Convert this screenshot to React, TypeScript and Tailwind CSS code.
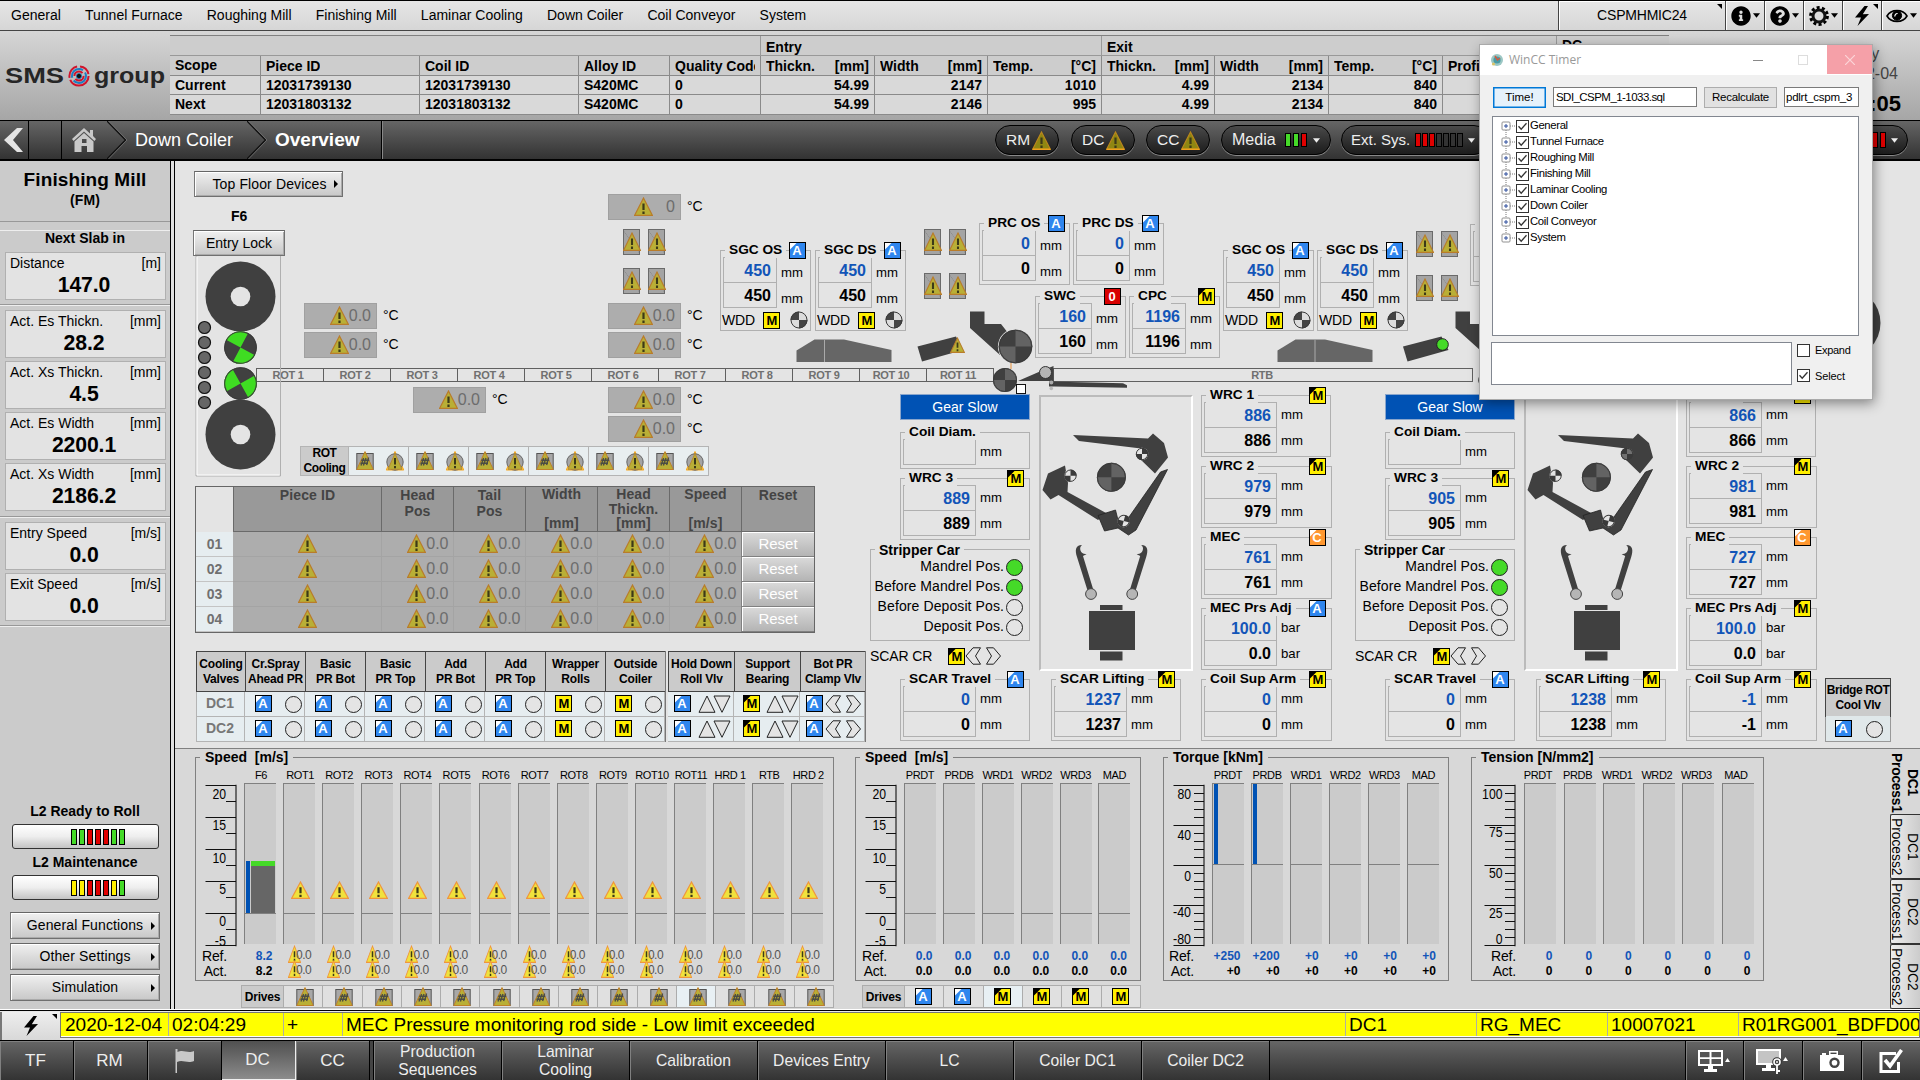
import React from "react";
import { FaInfoCircle, FaQuestionCircle } from "react-icons/fa";

/* ---------- small symbols ---------- */

function Warn({ className = "", bright = false, dim = false }: { className?: string; bright?: boolean; dim?: boolean }) {
  return (
    <svg viewBox="0 0 19 18" className={"shrink-0 " + className} preserveAspectRatio="none">
      <polygon points="9.5,1 18.3,17.3 0.7,17.3" fill={bright ? "#f0e23c" : dim ? "#8f8712" : "#b9af36"} stroke={bright ? "#f0963c" : dim ? "#b9861c" : "#b97c2a"} strokeWidth="1.2" />
      {dim && <path d="M0.7 17.3H18.3" stroke="#f0a01e" strokeWidth="1.4" />}
      <path d="M9.5 6.2v6M9.5 13.8v2.2" stroke="#3c3a18" strokeWidth="2.2" />
    </svg>
  );
}

type Mode = "A" | "A0" | "M" | "M0" | "C" | "0";
const modeFill: Record<Mode, string> = { A: "#2f86ee", A0: "#2f86ee", M: "#ffee00", M0: "#ffee00", C: "#ff9730", "0": "#d80000" };

function Badge({ mode, className = "" }: { mode: Mode; className?: string }) {
  const isM = mode[0] === "M";
  const corner = mode === "A" || mode === "C" ? "#ffffff" : mode === "M" ? "#000000" : null;
  return (
    <svg viewBox="0 0 17 17" className={"h-[17px] w-[17px] shrink-0 " + className}>
      <rect x="0.5" y="0.5" width="16" height="16" fill={modeFill[mode]} stroke="#000" />
      {corner && <polygon points="1,1 7.5,1 1,7.5" fill={corner} />}
      <text x={isM ? 8.8 : 8} y="13.4" textAnchor="middle" fontSize="13" fontWeight="bold" fontFamily="Liberation Sans, sans-serif" fill={isM ? "#000" : "#fff"}>
        {mode[0]}
      </text>
    </svg>
  );
}

function Lamp({ on = false, className = "" }: { on?: boolean; className?: string }) {
  return <span className={"block h-[17px] w-[17px] shrink-0 rounded-full border border-[#222] " + (on ? "bg-[#45da28] " : "bg-[#e4e4e4] ") + className} />;
}

function Quad({ cx, cy, r, a = "#3f3f3f", b = "#666", turn = 0 }: { cx: number; cy: number; r: number; a?: string; b?: string; turn?: number }) {
  return (
    <g transform={`translate(${cx} ${cy}) rotate(${turn})`}>
      <circle r={r} fill={a} />
      <path d={`M0 0V${-r}A${r} ${r} 0 0 1 ${r} 0ZM0 0V${r}A${r} ${r} 0 0 1 ${-r} 0Z`} fill={b} />
      <circle r={r - 0.5} fill="none" stroke="#3a3a3a" />
    </g>
  );
}

function HashWarn({ round = false }: { round?: boolean }) {
  return (
    <svg viewBox="0 0 18 20" className="h-[20px] w-[18px] shrink-0">
      {round ? (
        <>
          <polygon points="9,0.5 17.8,19 0.2,19" fill="#ffd84a" stroke="#f5a623" />
          <circle cx="9" cy="11" r="8.2" fill="#a5a5a5" stroke="#666" />
          <polygon points="9,2.5 16,18.3 2,18.3" fill="#b9af36" stroke="#b98a30" />
          <path d="M9 7v6.5M9 15v2.2" stroke="#3c3a18" strokeWidth="2" />
        </>
      ) : (
        <>
          <rect x="0.8" y="2.5" width="16.4" height="16" fill="#a8a8a8" stroke="#555" />
          <polygon points="9,0.6 17.2,18.5 0.8,18.5" fill="#b9af36" stroke="#c0802a" strokeWidth="1" />
          <path d="M7.6 7l-2.6 7.5M10 7L7.4 14.5M12.6 6.5l-2 7.5M5.2 9.2h8M4.4 12.2h7.6" stroke="#4c4c44" strokeWidth="1.4" fill="none" />
        </>
      )}
    </svg>
  );
}

function Bars({ colors }: { colors: string[] }) {
  return (
    <span className="flex gap-[2px]">
      {colors.map((c, i) => (
        <span key={i} className={"h-4 w-1.5 border border-black " + c} />
      ))}
    </span>
  );
}
const G = "bg-[#45da28]";
const R = "bg-[#e00000]";
const Y = "bg-[#ffee00]";
const D = "bg-[#333]";

function Bolt({ className = "" }: { className?: string }) {
  return (
    <svg viewBox="0 0 16 20" className={"h-5 w-4 " + className}>
      <polygon points="10.5,0 1,11.5 7,11.5 3.5,20 15,8 8.8,8.2 14,0" />
    </svg>
  );
}

function Caret({ className = "" }: { className?: string }) {
  return (
    <svg viewBox="0 0 8 5" className={"h-[5px] w-[7px] shrink-0 " + className}>
      <polygon points="0,0 8,0 4,5" fill="currentColor" />
    </svg>
  );
}

/* ---------- top area ---------- */

function MenuBar() {
  const tool = "flex h-full w-[39px] items-center justify-center border-l border-[#444] shadow-[inset_1px_1px_0_#fff] relative";
  return (
    <div className="flex h-[31px] items-center border-b border-t border-b-[#444] border-t-black bg-gradient-to-b from-[#e6e6e6] to-[#d6d6d6] text-[14px]">
      <div className="flex grow gap-[24.2px] pl-[11px]">
        {["General", "Tunnel Furnace", "Roughing Mill", "Finishing Mill", "Laminar Cooling", "Down Coiler", "Coil Conveyor", "System"].map((t) => (
          <span key={t}>{t}</span>
        ))}
      </div>
      <div className="relative flex h-full w-[167px] items-center justify-center border-l border-[#444] shadow-[inset_1px_1px_0_#fff]">
        <span className="tracking-[-0.2px]">CSPMHMIC24</span>
        <svg viewBox="0 0 5 5" className="absolute right-[3px] top-[3px] h-[5px] w-[5px]"><polygon points="0,0 5,0 5,5" /></svg>
      </div>
      <div className={tool}><FaInfoCircle className="h-5 w-5" /><Caret className="ml-0.5" /></div>
      <div className={tool}><FaQuestionCircle className="h-5 w-5" /><Caret className="ml-0.5" /></div>
      <div className={tool}>
        <svg viewBox="0 0 20 20" className="h-5 w-5">
          <circle cx="10" cy="10" r="8.4" fill="none" stroke="#000" strokeWidth="3" strokeDasharray="3 2.28" />
          <circle cx="10" cy="10" r="6" fill="#ddd" stroke="#111" strokeWidth="3" />
        </svg>
        <Caret className="ml-0.5" />
      </div>
      <div className={tool}>
        <Bolt />
        <svg viewBox="0 0 5 5" className="absolute right-[3px] top-[3px] h-[5px] w-[5px]"><polygon points="0,0 5,0 5,5" /></svg>
      </div>
      <div className={tool}>
        <svg viewBox="0 0 22 16" className="h-4 w-[22px]" fill="none" stroke="#000">
          <path d="M1 8C5 0.8 17 0.8 21 8C17 15.2 5 15.2 1 8Z" strokeWidth="1.6" />
          <circle cx="11" cy="7.6" r="4.6" fill="#000" />
          <path d="M9 8.5a2.4 2.4 0 0 1 2.6-3" stroke="#fff" strokeWidth="1.2" />
        </svg>
        <Caret className="ml-0.5" />
      </div>
    </div>
  );
}

function Logo() {
  return (
    <svg viewBox="0 0 170 89" className="h-[89px] w-[170px] shrink-0" fontFamily="Liberation Sans, sans-serif" fontWeight="bold" fontSize="21.5" fill="#262626">
      <text x="5" y="51.5" textLength="59" lengthAdjust="spacingAndGlyphs">SMS</text>
      <text x="94" y="51.5" textLength="71" lengthAdjust="spacingAndGlyphs">group</text>
      <g fill="none" strokeWidth="2">
        <circle cx="79" cy="45" r="9.6" stroke="#d0142c" strokeDasharray="26 2 15 3 12 2" />
        <circle cx="79" cy="45" r="7" stroke="#1d7ec2" strokeDasharray="17 3" />
        <circle cx="79" cy="45" r="4.6" stroke="#d0142c" strokeDasharray="11 3" />
        <circle cx="79" cy="45" r="2.6" fill="#111" stroke="#1d7ec2" strokeWidth="0.8" />
      </g>
    </svg>
  );
}

const headCols: [string, string][] = [
  ["Scope", ""], ["Piece ID", ""], ["Coil ID", ""], ["Alloy ID", ""], ["Quality Code", ""],
  ["Thickn.", "[mm]"], ["Width", "[mm]"], ["Temp.", "[°C]"], ["Thickn.", "[mm]"], ["Width", "[mm]"], ["Temp.", "[°C]"], ["Profile", ""], ["", ""],
];
const headRows = [
  ["Current", "12031739130", "12031739130", "S420MC", "0", "54.99", "2147", "1010", "4.99", "2134", "840", "", ""],
  ["Next", "12031803132", "12031803132", "S420MC", "0", "54.99", "2146", "995", "4.99", "2134", "840", "", ""],
];

function Header() {
  return (
    <div className="flex h-[89px] bg-gradient-to-b from-[#d6d6d6] to-[#a6a6a6]">
      <Logo />
      <div className="mt-1 grid h-[80px] w-[1499px] shrink-0 grid-cols-[90px_159px_159px_91px_91px_114px_113px_114px_113px_114px_114px_114px_113px] grid-rows-4 border-t border-[#808080] text-[14px] font-bold leading-[19px]">
        <div className="col-span-5 border-b border-[#999] bg-[#cdcdcd]" />
        <div className="col-span-3 overflow-hidden border-b border-l border-[#999] bg-[#cdcdcd] pl-[5px] pt-[2px]">Entry</div>
        <div className="col-span-4 overflow-hidden border-b border-l border-[#999] bg-[#cdcdcd] pl-[5px] pt-[2px]">Exit</div>
        <div className="overflow-hidden border-b border-l border-[#999] bg-[#cdcdcd] pl-[5px]">DC</div>
        {headCols.map(([a, b], i) => (
          <div key={i} className={"flex justify-between overflow-hidden whitespace-nowrap border-b border-[#8a8a8a] bg-[#cdcdcd] px-[5px] " + (i === 0 ? "" : "border-l pt-[1.5px]")}>
            <span className="overflow-hidden">{a}</span>
            <span>{b}</span>
          </div>
        ))}
        {headRows.map((r, k) =>
          r.map((c, i) => (
            <div key={k + "-" + i} className={"border-b border-[#8a8a8a] bg-[#d9d9d9] px-[5px] " + (i === 0 ? "" : "border-l ") + (i > 4 ? "text-right" : "")}>{c}</div>
          )),
        )}
      </div>
      <div className="ml-[141px] flex w-[94px] flex-col items-center pt-[13px] text-[16px] leading-[20px] text-[#444]">
        <span>Friday</span>
        <span>2020-12-04</span>
        <span className="mt-2 text-[22px] font-bold leading-[24px] text-black">02:04:05</span>
      </div>
    </div>
  );
}

function Pill({ children, className = "" }: { children: React.ReactNode; className?: string }) {
  return (
    <div className={"flex h-[30px] items-center rounded-full border-[1.5px] border-black bg-gradient-to-b from-[#4a4a4a] to-[#1c1c1c] text-[15.5px] text-[#eee] shadow-[0_1px_0_#888] " + className}>{children}</div>
  );
}

function Crumb({ className = "" }: { className?: string }) {
  return (
    <svg viewBox="0 0 20 38" className={"h-[38px] w-5 shrink-0 " + className} fill="none">
      <path d="M0 0L18.5 19L0 38" stroke="#111" strokeWidth="1.4" />
      <path d="M1.5 0L20 19L1.5 38" stroke="#777" strokeWidth="0.8" />
    </svg>
  );
}

function NavBar() {
  const unit = "w-[64px] gap-[2px] pl-[10px]";
  return (
    <div className="flex h-[41px] items-center border-b-2 border-t border-black bg-gradient-to-b from-[#666] to-[#333] text-[18px] text-white">
      <div className="flex h-full w-[29px] items-center border-r border-black pl-1">
        <svg viewBox="0 0 19 24" className="h-6 w-[19px]"><polygon points="13,0 19,0 9,12 19,24 13,24 0,12" fill="#e4e4e4" /></svg>
      </div>
      <div className="h-full w-[33px] border-r border-black" />
      <svg viewBox="0 0 24 24" className="ml-[10px] h-6 w-6" fill="#c9c9c9">
        <polygon points="12,0 0,11 1.6,13 12,3.4 22.4,13 24,11 21,8 21,2 18,2 18,5.4" />
        <path d="M2.5 13.5L12 5L21.5 13.5V24H15V18H9.5V24H2.5ZM10 11V15H14.5V11Z" fillRule="evenodd" />
      </svg>
      <Crumb className="ml-[11px]" />
      <span className="ml-[8px] w-[112px]">Down Coiler</span>
      <Crumb />
      <span className="ml-[8px] w-[85px] text-[19px] font-bold">Overview</span>
      <div className="ml-[21px] h-full border-l border-black shadow-[1px_0_0_#888]" />
      <div className="flex grow items-center pl-[613px]">
        <Pill className={unit}>RM<Warn dim className="h-[19px] w-[19px]" /></Pill>
        <Pill className={"ml-3 " + unit}>DC<Warn dim className="h-[19px] w-[19px]" /></Pill>
        <Pill className={"ml-[11px] " + unit}>CC<Warn dim className="h-[19px] w-[19px]" /></Pill>
        <Pill className="ml-[11px] w-[110px] gap-[8px] pl-[10px]">
          <span className="w-[45px] text-[16px]">Media</span>
          <span className="flex gap-[2px]">
            {[G, G, R].map((c, i) => <span key={i} className={"h-[14px] w-1.5 border border-black " + c} />)}
          </span>
          <Caret className="-ml-0.5" />
        </Pill>
        <Pill className="ml-[10px] w-[148px] gap-[5px] pl-[9px]">
          <span className="text-[15px]">Ext. Sys.</span>
          <span className="flex gap-px">
            {[R, R, R, D, D, D, D].map((c, i) => <span key={i} className={"h-[14px] w-1.5 border border-black " + c} />)}
          </span>
          <Caret />
        </Pill>
        <Pill className="ml-auto mr-[12px] w-[148px] justify-end gap-[5px] pr-[9px]">
          <Bars colors={[R, R, R]} />
          <Caret />
        </Pill>
      </div>
    </div>
  );
}

/* ---------- left column ---------- */

function Readout({ label, unit, value }: { label: string; unit: string; value: string }) {
  return (
    <div className="ml-[5px] h-[48px] w-[161px] border border-[#b0b0b0] bg-[#e3e3e3]">
      <div className="flex justify-between pl-[4px] pr-[4px] text-[14px] leading-[20px]"><span>{label}</span><span>{unit}</span></div>
      <div className="pr-[3px] text-center text-[21.2px] font-bold leading-[23px] tracking-[-0.1px] text-black">{value}</div>
    </div>
  );
}

function Button({ label, className = "", arrow = false }: { label: string; className?: string; arrow?: boolean }) {
  return (
    <div className={"flex items-center justify-center border border-b-[#707070] border-l-[#777] border-r-[#707070] border-t-[#666] bg-gradient-to-b from-[#f0f0f0] to-[#c8c8c8] text-[14px] shadow-[inset_1px_1px_0_#fff,inset_-1px_-1px_0_#aaa] " + className}>
      <span className={"grow text-center " + (arrow ? "pl-[8px] tracking-[0.12px]" : "")}>{label}</span>
      {arrow && (
        <svg viewBox="0 0 4 8" className="mr-[4px] h-2 w-1"><polygon points="0,0 4,4 0,8" /></svg>
      )}
    </div>
  );
}

function Side() {
  const line = "border-t border-[#989898] shadow-[0_1px_0_#eee]";
  const status = "flex h-[25px] w-[147px] items-center justify-center rounded-[3px] border border-[#333] bg-gradient-to-b from-white via-[#eee] to-[#c4c4c4] pl-6";
  return (
    <div className="flex h-[848px] w-[175px] shrink-0 border-r border-black bg-[#e0e0e0]">
      <div className="flex w-[171px] flex-col border-r border-black bg-[#cbcbcb]">
        <div className="h-[60px] pt-[8px] text-center text-[19px] font-bold leading-[22px] tracking-[0.1px]">
          Finishing Mill
          <div className="text-[14px] leading-[18px]">(FM)</div>
        </div>
        <div className={"pt-[8px] " + line} />
        <div className="h-[22px] text-center text-[14px] font-bold leading-[16px]">Next Slab in</div>
        <Readout label="Distance" unit="[m]" value="147.0" />
        <div className={"mb-[4px] mt-[4px] " + line} />
        <div className="mt-px flex flex-col gap-[3px]">
          <Readout label="Act. Es Thickn." unit="[mm]" value="28.2" />
          <Readout label="Act. Xs Thickn." unit="[mm]" value="4.5" />
          <Readout label="Act. Es Width" unit="[mm]" value="2200.1" />
          <Readout label="Act. Xs Width" unit="[mm]" value="2186.2" />
        </div>
        <div className={"mb-[5px] mt-[5px] " + line} />
        <div className="flex flex-col gap-[3px]">
          <Readout label="Entry Speed" unit="[m/s]" value="0.0" />
          <Readout label="Exit Speed" unit="[m/s]" value="0.0" />
        </div>
        <div className={"mt-[4px] " + line} />
        <div className="mt-auto flex flex-col items-center pb-[8px] text-[14px] font-bold">
          <span className="mb-[5px] leading-4">L2 Ready to Roll</span>
          <div className={status + " relative left-[0.5px]"}><Bars colors={[G, G, R, R, R, G, G]} /></div>
          <span className="mb-[5px] mt-[5px] leading-4">L2 Maintenance</span>
          <div className={status + " relative left-[0.5px]"}><Bars colors={[Y, Y, R, R, R, Y, G]} /></div>
          <div className="mt-[12px] flex flex-col gap-[4px] font-normal">
            <Button label="General Functions" arrow className="h-[27px] w-[150px]" />
            <Button label="Other Settings" arrow className="h-[27px] w-[150px]" />
            <Button label="Simulation" arrow className="h-[27px] w-[150px]" />
          </div>
        </div>
      </div>
    </div>
  );
}

/* ---------- process mimic ---------- */

type BoxProps = { title: string; className: string; mode?: Mode; set?: string; act?: string; unit?: string; field?: string; badge?: string; unitPad?: string; titleTop?: string; foot?: boolean };

function Box({ title, className, mode, set, act, unit = "mm", field = "w-[73px]", badge = "right-[5px]", unitPad = "pt-0", titleTop = "-top-[9px]", foot }: BoxProps) {
  const single = act === undefined;
  return (
    <div className={"absolute border border-[#b0b0b0] " + className}>
      <span className={"absolute left-[4px] whitespace-nowrap bg-[#e4e4e4] px-1 text-[13.7px] font-bold leading-4 " + titleTop}>{title}</span>
      {mode && <span className={"absolute -top-[9px] " + badge}><Badge mode={mode} /></span>}
      <div className={"ml-[2px] mt-[6px] flex " + (single ? "h-[26px]" : "h-[51px]")}>
        <div className={"border border-[#b0b0b0] text-right font-bold " + field}>
          <div className={"h-[25px] pr-[5px] text-[16px] leading-[26px] text-[#1255b8] " + (single ? "" : "border-b border-[#b0b0b0]")}>{set}</div>
          {!single && <div className="h-[24px] pr-[5px] text-[16px] leading-[26px]">{act}</div>}
        </div>
        <div className={"pl-[4px] text-[13.2px] leading-[25px] " + unitPad}>
          <div>{unit}</div>
          {!single && <div className="relative top-px">{unit}</div>}
        </div>
      </div>
      {foot && (
        <div className="mt-[3px] flex h-[18px] items-center pl-px text-[14px] leading-[17px]">
          <span className="w-[41px] tracking-[-0.2px]">WDD</span>
          <Badge mode="M0" />
          <svg viewBox="-9 -9 18 18" className="ml-[10px] h-[18px] w-[18px]"><Quad cx={0} cy={0} r={8.5} a="#dcdcdc" b="#444" turn={90} /></svg>
        </div>
      )}
    </div>
  );
}

function Temp({ className, value = "0.0" }: { className: string; value?: string }) {
  return (
    <div className={"absolute flex items-center " + className}>
      <div className="flex h-[26px] w-[73px] items-center justify-end border border-[#a0a0a0] bg-[#adadad] pr-[5px] text-[16px] text-[#6c6c6c]">
        <Warn className={"mb-px h-[19px] w-[19px] " + (value === "0" ? "mr-[13px]" : "")} />
        {value}
      </div>
      <span className="relative -top-px ml-[6px] text-[14px] leading-none">°C</span>
    </div>
  );
}

function ValvePair({ className }: { className: string }) {
  const v = (
    <span className="flex h-[26px] w-[17px] items-end justify-center border border-[#6a6a6a] bg-[#a4a4a4] bg-[linear-gradient(55deg,transparent_48%,#8c8c8c_50%,transparent_52%)] pb-[3px]">
      <Warn className="h-[19px] w-[18px]" />
    </span>
  );
  return <div className={"absolute flex gap-[8px] " + className}>{v}{v}</div>;
}

const K = "#404040";

function CoilerDrawing({ darkHub = false }: { darkHub?: boolean }) {
  return (
    <svg viewBox="1040 396 152 274" className="h-[274px] w-[152px]">
      <polygon points="1073,435 1148,438.5 1153,433.5 1164,443 1168,457.5 1155,473.5 1140,459 1141,448.5 1079,441" fill={K} />
      <polygon points="1065,465.5 1068,483 1067.5,492 1107,513.5 1098,520 1058.5,495 1050.5,499.5 1042.5,490 1048,473.5" fill={K} />
      <polygon points="1098,515.5 1115.5,510 1118,520 1129,517 1160.5,472 1167.5,469.5 1136,530 1128.5,535 1118,528 1104.5,531" fill={K} stroke="#222" strokeWidth="0.8" />
      {darkHub ? <Quad cx={1142} cy={454} r={6.2} a="#3a3a3a" b="#707070" /> : <Quad cx={1142} cy={454} r={6.2} a="#e4e4e4" b="#3a3a3a" />}
      <Quad cx={1070.5} cy={475.7} r={6.2} a="#e4e4e4" b="#3a3a3a" />
      <Quad cx={1123.7} cy={521} r={6.2} a="#e4e4e4" b="#3a3a3a" turn={15} />
      <Quad cx={1111.4} cy={477.3} r={14.5} b="#636363" />
      {[0, 1].map((i) => (
        <g key={i} transform={i ? "translate(2223.2 0) scale(-1 1)" : undefined}>
          <path d="M1082 545C1075 545 1075 551 1077 557L1088 592H1094L1083 556C1084 555 1086 555 1086.5 554C1081 555 1078 548 1082 545Z" fill={K} />
          <circle cx="1091" cy="594" r="5.4" fill="#b5b5b5" stroke="#444" />
        </g>
      ))}
      <rect x="1100" y="605" width="22.5" height="5" fill={K} />
      <rect x="1089" y="611" width="46" height="39" fill={K} />
      <rect x="1100" y="651.5" width="22.5" height="9" fill={K} />
    </svg>
  );
}

function Chevrons() {
  return (
    <svg viewBox="0 0 37 18" className="h-[18px] w-[37px] shrink-0" fill="#e4e4e4" stroke="#222">
      <polygon points="8,0.8 15.5,0.8 10.5,9 15.5,17.2 8,17.2 1,9" />
      <polygon points="21.5,0.8 28.5,0.8 35.5,9 28.5,17.2 21.5,17.2 26.5,9" />
    </svg>
  );
}

function UpDown() {
  return (
    <svg viewBox="0 0 33 18" className="h-[18px] w-[33px] shrink-0" fill="#e4e4e4" stroke="#222">
      <polygon points="9,1 17,17.3 1,17.3" />
      <polygon points="16,1 32,1 24,17.3" />
    </svg>
  );
}

type CoilerData = {
  wrc1: string; wrc2: string; wrc3: string; mec: string; travel: string; lift: string; sup: string; adj: Mode; darkHub?: boolean; className: string;
};

function DownCoiler(p: CoilerData) {
  return (
    <div className={"absolute top-[387px] h-[354px] w-[462px] " + p.className}>
      <div className="absolute left-[30px] top-[7px] flex h-[26px] w-[130px] items-center justify-center border border-[#8aa6cc] bg-[#0052b4] text-[14px] text-white">Gear Slow</div>
      <Box title="Coil Diam." className="left-[30px] top-[45px] h-[37px] w-[130px]" set="" />
      <Box title="WRC 3" className="left-[30px] top-[91px] h-[62px] w-[130px]" mode="M" set={p.wrc3} act={p.wrc3} />
      <div className="absolute left-0 top-[162px] h-[92px] w-[160px] border border-[#b0b0b0]">
        <span className="absolute -top-[8px] left-[4px] bg-[#e4e4e4] px-1 text-[14px] font-bold leading-4">Stripper Car</span>
        <div className="mt-[9px] flex flex-col gap-[3px] pr-[6px] text-[14px] leading-[17px]">
          {["Mandrel Pos.", "Before Mandrel Pos.", "Before Deposit Pos.", "Deposit Pos."].map((t, i) => (
            <div key={t} className="flex items-center justify-end gap-[2px] tracking-[0.1px]"><span className="relative -top-px">{t}</span><Lamp on={i < 2} /></div>
          ))}
        </div>
      </div>
      <div className="absolute left-0 top-[260px] flex items-center text-[14px] leading-[17px]">
        <span className="w-[78px] tracking-[-0.1px]">SCAR CR</span><Badge mode="M" /><Chevrons />
      </div>
      <Box title="SCAR Travel" className="left-[30px] top-[292px] h-[62px] w-[130px]" mode="A" set={p.travel} act={p.travel} />
      <div className="absolute left-[169px] top-[8px] border-2 border-[#bbb] border-b-white border-r-white">
        <div className="-m-px"><CoilerDrawing darkHub={p.darkHub} /></div>
      </div>
      <Box title="SCAR Lifting" className="left-[181px] top-[292px] h-[62px] w-[130px]" mode="M" set={p.lift} act={p.lift} />
      <Box title="WRC 1" className="left-[331px] top-[8px] h-[62px] w-[130px]" mode="M" badge="right-[4px]" set={p.wrc1} act={p.wrc1} />
      <Box title="WRC 2" className="left-[331px] top-[79px] h-[62px] w-[131px]" mode="M" set={p.wrc2} act={p.wrc2} />
      <Box title="MEC" className="left-[331px] top-[150px] h-[62px] w-[131px]" mode="C" set={p.mec} act={p.mec} />
      <Box title="MEC Prs Adj" className="left-[331px] top-[221px] h-[62px] w-[131px]" mode={p.adj} set="100.0" act="0.0" unit="bar" />
      <Box title="Coil Sup Arm" className="left-[331px] top-[292px] h-[62px] w-[131px]" mode="M" set={p.sup} act={p.sup} />
    </div>
  );
}

function LineDrawing() {
  return (
    <svg viewBox="175 161 1745 587" className="absolute left-[175px] top-[161px] h-[587px] w-[1745px]">
      <path d="M196 256V476H280.5V256" fill="none" stroke="#b0b0b0" />
      <path d="M197 257V475H279.5" fill="none" stroke="#fff" />
      {[296.5, 434.5].map((y) => (
        <g key={y}>
          <circle cx="240.5" cy={y} r="35" fill={K} />
          <circle cx="240.5" cy={y} r="9.8" fill="#e4e4e4" />
        </g>
      ))}
      <Quad cx={240.5} cy={347.5} r={16.3} a={K} b="#3fdc22" turn={-62} />
      <Quad cx={240.5} cy={383.5} r={16.3} a={K} b="#3fdc22" turn={61} />
      {[327.5, 342.5, 357.5, 372.5, 387.5, 402.5].map((y) => <circle key={y} cx="204.5" cy={y} r="6" fill="#666" stroke="#111" strokeWidth="1.2" />)}
      {[[0, 824.5], [481, 834]].map(([dx, split]) => (
        <g key={dx} transform={`translate(${dx} 0)`}>
          <polygon points="796.5,350.5 814.5,339.5 844,339.5 891.5,350 891.5,362 796.5,362" fill="#666" />
          <path d={`M${split} 339.5V362`} stroke="#aaa" />
        </g>
      ))}
      {[0, 485.5].map((dx) => (
        <g key={dx} transform={`translate(${dx} 0)`}>
          <polygon points="917.5,346.5 956,336.5 963,350 922,361.5" fill={K} />
          <polygon points="970,311.5 984.5,311.5 984.5,324 1001,324 1012,338 1000,355 970,328" fill={K} />
          <circle cx="1015.5" cy="346.5" r="17.6" fill="#e4e4e4" />
          <Quad cx={1015.5} cy={346.5} r={16.8} b="#636363" />
          <path d="M1011 363V369" stroke="#e8923c" />
          <Quad cx={1005} cy={380} r={12} b="#636363" />
          <polygon points="1018,381 1041,371 1053.5,366 1053.5,381" fill={K} />
          <circle cx="1045.5" cy="372.5" r="6" fill="#b5b5b5" stroke="#333" />
          <polygon points="1049,381.5 1123,383.3 1127,385.3 1127,387.7 1054,386.4 1049,386.4" fill={K} />
          <circle cx="1051.3" cy="382.5" r="2" fill="#aaa" />
          <circle cx="1051.3" cy="388.5" r="1.8" fill="#b8b8b8" />
          <rect x="1016.5" y="384.5" width="9" height="9" fill="#fff" stroke="#111" />
        </g>
      ))}
      <circle cx="1442.5" cy="344.5" r="5.8" fill="#45da28" stroke="#222" />
      <circle cx="1845.5" cy="323" r="35" fill={K} />
    </svg>
  );
}

function Strip() {
  return (
    <div className="absolute left-[256px] top-[368px] flex h-[14px] text-[11px] font-bold leading-[12px] tracking-[-0.3px] text-[#707070]">
      {Array.from({ length: 11 }, (_, i) => (
        <div key={i} className="w-[67px] border-y border-l-[1.5px] border-[#606060] pr-1 text-center">ROT {i + 1}</div>
      ))}
      <div className="w-px bg-[#606060]" />
      <div className="ml-[59px] w-[420px] border border-[#606060] pr-[2px] text-center">RTB</div>
    </div>
  );
}

function RotCooling() {
  return (
    <div className="absolute left-[300px] top-[446px] flex h-[30px] border border-[#b4b4b4] bg-[#e8eef0]">
      <div className="flex w-[47px] items-center bg-[#cbcbcb] text-center text-[12px] font-bold leading-[15px] tracking-[-0.4px]"><span className="w-full">ROT<br />Cooling</span></div>
      {[0, 1, 2, 3, 4, 5].map((i) => (
        <div key={i} className="flex w-[60px] items-center justify-center gap-[12px] border-l border-[#b4b4b4] pl-[3px]"><HashWarn /><HashWarn round /></div>
      ))}
    </div>
  );
}

function QueueTable() {
  const head = ["", "Piece ID", "Head\nPos", "Tail\nPos", "Width\n\n[mm]", "Head\nThickn.\n[mm]", "Speed\n\n[m/s]", "Reset"];
  return (
    <div className="absolute left-[195px] top-[486px] grid w-[620px] grid-cols-[37px_148px_72px_72px_72px_72px_72px_73px] grid-rows-[45px_25px_25px_25px_25px] border border-[#666]">
      {head.map((h, i) => (
        <div
          key={i}
          className={
            i === 0
              ? "bg-[#e4e4e4]"
              : "overflow-hidden whitespace-pre border-b border-l border-[#6a6a6a] bg-[#999] text-center text-[14px] font-bold tracking-[0.1px] text-[#444] " +
                (i === 5 ? "leading-[14.6px]" : i === 4 || i === 6 ? "leading-[14.6px]" : "leading-[16px]")
          }
        >
          {h}
        </div>
      ))}
      {["01", "02", "03", "04"].map((n) => (
        <React.Fragment key={n}>
          <div className="border-b border-[#c4c4c4] bg-[#e6edf0] text-center text-[14px] font-bold leading-[24px] text-[#707070]">{n}</div>
          <div className="flex items-center justify-center border-b border-[#a4a4a4] bg-[#adadad] pb-px"><Warn className="h-[19px] w-[19px]" /></div>
          {[0, 1, 2, 3, 4].map((i) => (
            <div key={i} className="flex items-center justify-end border-b border-l border-[#a4a4a4] bg-[#adadad] pb-px pr-[4.5px] text-[16px] text-[#6c6c6c]"><Warn className="h-[19px] w-[19px]" />0.0</div>
          ))}
          <div className="flex items-center justify-center border-b border-l border-[#808080] bg-gradient-to-b from-[#dadada] to-[#b4b4b4] text-[15px] text-white shadow-[inset_1px_1px_0_#fff]">Reset</div>
        </React.Fragment>
      ))}
    </div>
  );
}

function ValveTable() {
  const h = "flex h-[41px] items-center justify-center whitespace-pre border border-r-0 border-[#444] bg-[#cbcbcb] text-center text-[12px] font-bold leading-[15px] tracking-[-0.2px]";
  const cell = "flex items-center border-b border-r border-[#b4b4b4] bg-[#e6edf0]";
  const left: [string, Mode][] = [["Cr.Spray\nAhead PR", "A"], ["Basic\nPR Bot", "A"], ["Basic\nPR Top", "A"], ["Add\nPR Bot", "A"], ["Add\nPR Top", "A"], ["Wrapper\nRolls", "M0"], ["Outside\nCoiler", "M0"]];
  const right: [string, Mode][] = [["Hold Down\nRoll Vlv", "A"], ["Support\nBearing", "M"], ["Bot PR\nClamp Vlv", "A"]];
  return (
    <div className="absolute left-[196px] top-[651px] flex gap-[2px]">
      <div className="grid grid-cols-[49px_60px_60px_60px_60px_60px_60px_60px] grid-rows-[41px_25px_25px] border-r border-[#777]">
        <div className={h}>{"Cooling\nValves"}</div>
        {left.map(([t]) => <div key={t} className={h}>{t}</div>)}
        {["DC1", "DC2"].map((r) => (
          <React.Fragment key={r}>
            <div className={cell + " justify-center border-l pb-px pr-px text-[14px] font-bold text-[#777]"}>{r}</div>
            {left.map(([t, m]) => <div key={t} className={cell + " gap-[13px] pb-px pl-[10px]"}><Badge mode={m} /><Lamp className="relative top-px" /></div>)}
          </React.Fragment>
        ))}
      </div>
      <div className="grid grid-cols-[66px_66px_65px] grid-rows-[41px_25px_25px] border-r border-[#777]">
        {right.map(([t]) => <div key={t} className={h}>{t}</div>)}
        {["DC1", "DC2"].map((r) =>
          right.map(([t, m], i) => <div key={r + t} className={cell + " pb-px " + (i === 0 ? "gap-[7px] pl-[6px]" : i === 1 ? "gap-[6px] pl-[9px]" : "gap-[2px] pl-[6px]")}><Badge mode={m} />{i === 2 ? <Chevrons /> : <UpDown />}</div>),
        )}
      </div>
    </div>
  );
}

function Mimic() {
  const sm = { field: "w-[54px]", badge: "right-[4px]", unitPad: "pt-[3px]", titleTop: "-top-[9.5px]" };
  return (
    <div className="h-[587px] bg-[#e4e4e4]">
      <Strip />
      <LineDrawing />
      <Warn className="absolute left-[950px] top-[337px] h-[16px] w-[15px]" />
      <Button label="Top Floor Devices" arrow className="absolute left-[194px] top-[171px] h-[26px] w-[149px] pl-[2px]" />
      <span className="absolute left-[231px] top-[208px] text-[14px] font-bold leading-4">F6</span>
      <Button label="Entry Lock" className="absolute left-[193px] top-[230px] h-[26px] w-[92px]" />
      <Temp className="left-[304px] top-[303px]" />
      <Temp className="left-[304px] top-[332px]" />
      <Temp className="left-[413px] top-[387px]" />
      <Temp className="left-[608px] top-[194px]" value="0" />
      <Temp className="left-[608px] top-[303px]" />
      <Temp className="left-[608px] top-[332px]" />
      <Temp className="left-[608px] top-[387px]" />
      <Temp className="left-[608px] top-[416px]" />
      <ValvePair className="left-[623px] top-[229px]" />
      <ValvePair className="left-[623px] top-[268px]" />
      <ValvePair className="left-[924px] top-[229px]" />
      <ValvePair className="left-[924px] top-[273px]" />
      <ValvePair className="left-[1416px] top-[231px]" />
      <ValvePair className="left-[1416px] top-[275px]" />
      <Box title="SGC OS" className="left-[720px] top-[250px] h-[81px] w-[91px]" mode="A" set="450" act="450" {...sm} foot />
      <Box title="SGC DS" className="left-[815px] top-[250px] h-[81px] w-[91px]" mode="A" set="450" act="450" {...sm} foot />
      <Box title="PRC OS" className="left-[979px] top-[223px] h-[62px] w-[91px]" mode="A0" set="0" act="0" {...sm} />
      <Box title="PRC DS" className="left-[1073px] top-[223px] h-[62px] w-[91px]" mode="A" set="0" act="0" {...sm} />
      <Box title="SWC" className="left-[1035px] top-[296px] h-[62px] w-[91px]" mode="0" set="160" act="160" {...sm} />
      <Box title="CPC" className="left-[1129px] top-[296px] h-[62px] w-[91px]" mode="M" set="1196" act="1196" {...sm} />
      <Box title="SGC OS" className="left-[1223px] top-[250px] h-[81px] w-[91px]" mode="A" set="450" act="450" {...sm} foot />
      <Box title="SGC DS" className="left-[1317px] top-[250px] h-[81px] w-[91px]" mode="A" set="450" act="450" {...sm} foot />
      <Box title="PRC OS" className="left-[1470px] top-[224px] h-[62px] w-[91px]" mode="A" set="0" act="0" {...sm} />
      <RotCooling />
      <QueueTable />
      <ValveTable />
      <DownCoiler className="left-[870px]" wrc1="886" wrc2="979" wrc3="889" mec="761" travel="0" lift="1237" sup="0" adj="A" />
      <DownCoiler className="left-[1355px]" wrc1="866" wrc2="981" wrc3="905" mec="727" travel="0" lift="1238" sup="-1" adj="M" darkHub />
      <div className="absolute left-[1825px] top-[678px] w-[66px] border border-[#999]">
        <div className="-m-px h-[39px] whitespace-nowrap border border-[#444] bg-[#cbcbcb] pt-[4px] text-center text-[12px] font-bold leading-[15px] tracking-[-0.4px]">Bridge ROT<br />Cool Vlv</div>
        <div className="flex h-[25px] items-center justify-center gap-[14px] bg-[#e0e8ea] pl-px"><Badge mode="A" /><Lamp className="relative top-px" /></div>
      </div>
    </div>
  );
}

/* ---------- bar charts ---------- */

type AxisProps = { majors: number[]; step: number; labels: [string, number][]; shift?: number; labelEnd?: number };

function Axis({ majors, step, labels, shift = 0, labelEnd = 31 }: AxisProps) {
  const minors: number[] = [];
  for (let y = 2.5; y <= 163; y += step) minors.push(y);
  return (
    <svg viewBox="0 0 49 166" className="mt-[26px] h-[166px] w-[49px] shrink-0" fontFamily="Liberation Sans, sans-serif" fontSize="14">
      <path d={`M${41 + shift} 1.8V163.2` + majors.map((y) => `M${10.5 + shift} ${y}H${41 + shift}`).join("") + minors.map((y) => `M${31 + shift} ${y}H${41 + shift}`).join("")} stroke="#111" strokeWidth="1.1" fill="none" />
      {labels.map(([t, y]) => (
        <text key={t} x={labelEnd} y={y + 4.7} textAnchor="end" textLength={t.replace("-", "").length * 6.8 + (t[0] === "-" ? 4.4 : 0)} lengthAdjust="spacingAndGlyphs">{t}</text>
      ))}
    </svg>
  );
}

type Col = { name: string; ref?: string; act?: string; fault?: boolean; blue?: boolean; f6?: boolean };
type ChartProps = { title: string; width: string; axis: AxisProps; cols: Col[]; line?: string; axisW?: string; refW?: string; pitch?: string; nameW?: string; children?: React.ReactNode };

function Chart({ title, width, axis, cols, line, axisW = "w-[49px]", refW = "w-[32px]", pitch = "w-[39.1px]", nameW = "w-[34px]", children }: ChartProps) {
  return (
    <div className={"shrink-0 " + width}>
      <div className="relative h-[224px] border border-[#808080]">
        <span className="absolute -top-[9px] left-[4px] whitespace-pre bg-[#d8d8d8] px-[5px] text-[14px] font-bold leading-4">{title}</span>
        <div className="-ml-px -mt-px flex">
          <div className={"shrink-0 " + axisW}>
            <Axis {...axis} />
            <div className={"text-right text-[14px] leading-[14.5px] tracking-[-0.2px] " + refW}>Ref.<br />Act.</div>
          </div>
          {cols.map((c) => (
            <div key={c.name} className={"shrink-0 text-[12px] font-bold " + pitch}>
              <div className={"flex h-[26px] items-center justify-center whitespace-nowrap pt-[10px] text-[11px] font-normal leading-none tracking-[-0.4px] " + nameW}>{c.name}</div>
              <div className="relative h-[161px] w-[32px] border-l border-t border-[#808080] bg-[#cbcbcb]">
                {line && <div className={"absolute left-0 h-px w-full bg-[#808080] " + line} />}
                {c.fault && <Warn bright className="absolute left-[7px] top-[97px] h-[18px] w-[19px]" />}
                {c.blue && <div className="absolute left-px top-0 h-[80px] w-[4px] bg-[#0052b4]" />}
                {c.f6 && (
                  <>
                    <div className="absolute left-px top-[77px] h-[52px] w-[4px] bg-[#0052b4]" />
                    <div className="absolute left-[6px] top-[77px] h-[52px] w-[24px] border-t-[5px] border-[#45da28] bg-[#666]" />
                  </>
                )}
              </div>
              {c.fault ? (
                <div className="pt-[3px]">
                  {[0, 1].map((i) => (
                    <div key={i} className="flex h-[14.5px] w-[28px] items-center font-normal">
                      <Warn bright className="ml-[5px] h-[18px] w-[13px]" />
                      <span className="relative -left-[5px] top-px text-[12px] tracking-[-0.5px] text-[#555]">0.0</span>
                    </div>
                  ))}
                </div>
              ) : (
                <div className="w-[28.5px] pt-[5px] leading-[14.8px]">
                  <div className="flex justify-end text-[#1255b8]">{c.ref}</div>
                  <div className="flex justify-end">{c.act}</div>
                </div>
              )}
            </div>
          ))}
        </div>
      </div>
      {children}
    </div>
  );
}

function Drives({ className, children }: { className: string; children: React.ReactNode }) {
  return (
    <div className={"mt-[4px] flex h-[23px] border border-[#acacac] bg-[#e0e0e0] " + className}>
      <div className="flex w-[41px] shrink-0 items-center justify-center bg-[#cbcbcb] text-[12px] font-bold tracking-[-0.2px]">Drives</div>
      {children}
    </div>
  );
}

const speedAxis: AxisProps = {
  majors: [2.5, 34.5, 66.5, 98.5, 130.5, 162.5],
  step: 16,
  labels: [["20", 11.5], ["15", 42], ["10", 75.5], ["5", 106], ["0", 138.5], ["-5", 158]],
};
const torqueAxis: AxisProps = { majors: [2.5, 42.5, 82.5, 122.5, 162.5], step: 8, labels: [["80", 11.5], ["40", 52], ["0", 93], ["-40", 129], ["-80", 156]], labelEnd: 28 };
const tensionAxis: AxisProps = { majors: [2.5, 42.5, 82.5, 122.5, 162.5], step: 8, labels: [["100", 11.5], ["75", 49.5], ["50", 90], ["25", 130], ["0", 156.5]], shift: 3, labelEnd: 31.5 };
const mills = ["PRDT", "PRDB", "WRD1", "WRD2", "WRD3", "MAD"];

function Charts() {
  const rots = ["ROT1", "ROT2", "ROT3", "ROT4", "ROT5", "ROT6", "ROT7", "ROT8", "ROT9", "ROT10", "ROT11", "HRD 1", "RTB", "HRD 2"];
  const drive: Mode[] = ["A", "A", "M", "M", "M", "M0"];
  return (
    <div className="flex h-[261px] border-t border-[#808080] bg-[#d8d8d8] pl-[20px] pt-[8px]">
      <Chart title="Speed  [m/s]" width="w-[639px]" axis={speedAxis} line="top-[129px]"
        cols={[{ name: "F6", ref: "8.2", act: "8.2", f6: true }, ...rots.map((name) => ({ name, fault: true }))]}>
        <Drives className="ml-[46px]">
          {rots.map((r, i) => <div key={r} className={"flex grow items-center justify-center border-l border-[#acacac] pl-[4px] " + (i === 10 ? "bg-[#e8f0f4]" : "")}><HashWarn /></div>)}
        </Drives>
      </Chart>
      <div className="w-[21px] shrink-0" />
      <Chart title="Speed  [m/s]" width="w-[286px]" axis={speedAxis} line="top-[129px]" pitch="w-[38.9px]" nameW="w-[32px]" cols={mills.map((name) => ({ name, ref: "0.0", act: "0.0" }))}>
        <Drives className="ml-[7px]">
          {drive.map((m, i) => <div key={i} className={"flex grow items-center justify-center border-l border-[#acacac] pr-[1px] " + (i === 2 ? "bg-[#e8f0f4]" : "")}><Badge mode={m} /></div>)}
        </Drives>
      </Chart>
      <div className="w-[22px] shrink-0" />
      <Chart title="Torque [kNm]" width="w-[286px]" axis={torqueAxis} line="top-[80px]" refW="w-[31px]" nameW="w-[32px]"
        cols={mills.map((name, i) => ({ name, ref: ["+250", "+200"][i] ?? "+0", act: "+0", blue: i < 2 }))} />
      <div className="w-[22px] shrink-0" />
      <Chart title="Tension [N/mm2]" width="w-[293px]" axis={tensionAxis} axisW="w-[53px]" refW="w-[45px]" pitch="w-[39.6px]" nameW="w-[28px]" cols={mills.map((name) => ({ name, ref: "0", act: "0" }))} />
      <div className="-mt-[8px] ml-auto flex w-[30px] shrink-0 flex-col pt-[2px]">
        {[["DC1", "Process1"], ["DC1", "Process2"], ["DC2", "Process1"], ["DC2", "Process2"]].map(([a, b], i) => (
          <div key={i} className={"flex w-[30px] flex-col items-center text-[13.8px] leading-[16px] [writing-mode:vertical-rl] " + (i === 0 ? "h-[63px] font-bold tracking-[-0.2px]" : "h-[65px] rounded-l-[2px] border border-r-0 border-[#333] bg-gradient-to-r from-[#eee] to-[#ccc]")}>
            <div className="flex flex-col"><div className="text-center">{a}</div><div className="text-center">{b}</div></div>
          </div>
        ))}
      </div>
    </div>
  );
}

/* ---------- bottom bars ---------- */

function AlarmBar() {
  const c = "h-full shrink-0 overflow-hidden whitespace-nowrap border-l border-[#b0b0a0] pl-[3px]";
  return (
    <div className="h-[31px] border-t border-white">
      <div className="flex h-[30px] border-t border-black bg-[#e8e8e8] pt-[1px]">
        <div className="relative flex w-[60px] shrink-0 items-center justify-center border-l-2 border-[#777] bg-gradient-to-b from-[#eee] to-[#d8d8d8]">
          <Bolt />
          <svg viewBox="0 0 5 5" className="absolute right-[3px] top-[2px] h-[5px] w-[5px]"><polygon points="0,0 5,0 5,5" /></svg>
        </div>
        <div className="flex h-[26px] grow overflow-hidden border border-[#777] bg-white text-[19px] leading-[23px]">
          <div className="flex h-[23px] grow bg-[#ffff00]">
            <div className={c + " w-[107px] border-l-0 pl-[4px]"}>2020-12-04</div>
            <div className={c + " w-[115px]"}>02:04:29</div>
            <div className={c + " w-[59px]"}>+</div>
            <div className={c + " w-[1003px]"}>MEC Pressure monitoring rod side - Low limit exceeded</div>
            <div className={c + " w-[131px]"}>DC1</div>
            <div className={c + " w-[131px]"}>RG_MEC</div>
            <div className={c + " w-[131px]"}>10007021</div>
            <div className={c + " w-[181px]"}>R01RG001_BDFD001</div>
          </div>
        </div>
      </div>
    </div>
  );
}

function BottomBar() {
  const b = "flex h-full shrink-0 items-center justify-center border-r border-black bg-gradient-to-b from-[#666] to-[#333] shadow-[inset_1px_1px_0_#808080] ";
  return (
    <div className="flex h-[40px] border-t border-black bg-gradient-to-b from-[#666] to-[#333] text-center text-[17px] text-[#eee]">
      <div className={b + "w-[74px] pr-0.5"}>TF</div>
      <div className={b + "w-[74px] pr-0.5"}>RM</div>
      <div className={b + "w-[74px]"}>
        <svg viewBox="0 0 20 24" className="h-6 w-5"><path d="M0.5 0V24H2V13C8 10 12 15 19 12V2C12 5 9 0 2.5 3V0Z" fill="#c8c8c8" /></svg>
      </div>
      <div className="flex h-full w-[74px] shrink-0 items-center justify-center border-b border-r border-[#eee] bg-gradient-to-b from-[#505050] to-[#8c8c8c] pr-0.5">DC</div>
      <div className={b + "w-[74px]"}>CC</div>
      <div className="w-[4px] border-r border-black bg-[#444]" />
      {["Production\nSequences", "Laminar\nCooling", "Calibration", "Devices Entry", "LC", "Coiler DC1", "Coiler DC2"].map((t) => (
        <div key={t} className={b + "w-[128px] whitespace-pre text-[15.7px] leading-[18px]"}>{t}</div>
      ))}
      <div className="grow" />
      <div className={b + "w-[59px] border-l"}>
        <svg viewBox="0 0 34 24" className="h-6 w-[34px]" fill="#fff">
          <path d="M0 1H25V17H0Z" />
          <path d="M2 3H11.5V8.2H2ZM13.5 3H23V8.2H13.5ZM2 10H11.5V15H2ZM13.5 10H23V15H13.5Z" fill="#555" />
          <path d="M10 17H15V20H19V23H6V20H10Z" />
          <polygon points="27,13 32,13 29.5,9" />
        </svg>
      </div>
      <div className={b + "w-[59px]"}>
        <svg viewBox="0 0 34 26" className="h-[26px] w-[34px]" fill="#fff">
          <path d="M0 1H25V17H0Z" />
          <path d="M2 3H23V15H2Z" fill="#c4c4c4" />
          <path d="M10 17H15V20H19V23H6V20H10Z" />
          <circle cx="21" cy="14" r="3" fill="none" stroke="#333" strokeWidth="3.6" />
          <path d="M21 17V26M21 23H24" stroke="#fff" strokeWidth="1.8" />
          <circle cx="21" cy="14" r="3" fill="none" stroke="#fff" strokeWidth="1.6" />
          <polygon points="27,13 32,13 29.5,9" />
        </svg>
      </div>
      <div className={b + "w-[59px]"}>
        <svg viewBox="0 0 24 20" className="h-5 w-6" fill="#fff">
          <path d="M0 4H2V2H6V4H9V0H18V4H24V20H0Z" />
          <rect x="10.5" y="1.6" width="6" height="1.4" fill="#444" />
          <circle cx="14.5" cy="11.8" r="5.2" fill="#444" />
          <circle cx="14.5" cy="11.8" r="2.8" />
        </svg>
      </div>
      <div className={b + "w-[58px] border-r-0"}>
        <svg viewBox="0 0 24 24" className="h-6 w-6" fill="none" stroke="#fff">
          <path d="M17 4.5H2V22.5H19.5V13" strokeWidth="3" />
          <path d="M6 11L11 17L22.5 1" strokeWidth="3.6" />
        </svg>
      </div>
    </div>
  );
}

/* ---------- timer window ---------- */

function Check({ on = true }: { on?: boolean }) {
  return (
    <svg viewBox="0 0 13 13" className="h-[13px] w-[13px] shrink-0" fill="#fff" stroke="#333">
      <rect x="0.5" y="0.5" width="12" height="12" />
      {on && <path d="M2.5 6.2L5.2 9.2L10.5 3.2" fill="none" strokeWidth="1.3" />}
    </svg>
  );
}

function TimerWindow() {
  return (
    <div className="absolute left-[1480px] top-[45px] flex h-[354px] w-[392px] flex-col bg-[#f0f0f0] text-[11px] shadow-[0_0_0_1px_#aaa,2px_4px_12px_rgba(0,0,0,0.45)]">
      <div className="flex h-[30px] shrink-0 items-center bg-white pl-[10px] font-['Open_Sans',sans-serif] text-[12px] text-[#999]">
        <svg viewBox="0 0 14 14" className="mr-[5px] h-[14px] w-[14px]">
          <circle cx="7" cy="7" r="6" fill="#9cc7c4" />
          <circle cx="7" cy="7" r="3.6" fill="#4a9aa4" />
          <path d="M5 3l2.5 4L10 5" stroke="#d05a40" strokeWidth="1.5" fill="none" />
          <circle cx="3.5" cy="11" r="1.6" fill="#d9c46a" />
        </svg>
        <span className="grow">WinCC Timer</span>
        <svg viewBox="0 0 56 12" className="mr-[18px] h-3 w-14" fill="none">
          <path d="M0 6.5H10" stroke="#888" />
          <rect x="45.5" y="1.5" width="9" height="9" stroke="#ddd" />
        </svg>
        <div className="flex h-[29px] w-[45px] items-center justify-center self-start bg-[#f5a0a8]">
          <svg viewBox="0 0 10 10" className="h-[10px] w-[10px]"><path d="M0 0L10 10M10 0L0 10" stroke="#fbd5d9" strokeWidth="1.2" /></svg>
        </div>
      </div>
      <div className="mt-[12px] flex shrink-0 pl-[13px] text-[11.5px]">
        <div className="flex h-[21px] w-[53px] items-center justify-center border border-[#0078d7] bg-[#e5f1fb] shadow-[inset_0_0_0_0.5px_#0078d7]">Time!</div>
        <div className="ml-[7px] h-[20px] w-[144px] border border-[#7a7a7a] bg-white pl-[2px] leading-[18px] tracking-[-0.55px]">SDI_CSPM_1-1033.sql</div>
        <div className="ml-[7px] flex h-[21px] w-[73px] items-center justify-center border border-[#adadad] bg-[#e1e1e1] tracking-[-0.3px]">Recalculate</div>
        <div className="ml-[7px] h-[20px] w-[75px] border border-[#7a7a7a] bg-white pl-[1px] leading-[18px] tracking-[-0.25px]">pdlrt_cspm_3</div>
      </div>
      <div className="ml-[12px] mt-[8px] h-[220px] w-[367px] shrink-0 border border-[#828790] bg-white pl-[8px] pt-[1px]">
        {["General", "Tunnel Furnace", "Roughing Mill", "Finishing Mill", "Laminar Cooling", "Down Coiler", "Coil Conveyor", "System"].map((t, i) => (
          <div key={t} className="flex h-4 items-center tracking-[-0.35px]">
            <svg viewBox="0 0 15 16" className="h-4 w-[15px]" fill="none">
              <path d={(i === 0 ? "M5 12" : "M5 0") + (i === 7 ? "V4" : "V16") + "M9 8H15"} stroke="#777" strokeDasharray="1 1" />
              <rect x="1" y="4" width="8" height="8" rx="1" fill="#fff" stroke="#919191" />
              <path d="M3 8H7M5 6V10" stroke="#2c4c9c" />
            </svg>
            <Check />
            <span className="ml-px text-[11.3px] leading-none">{t}</span>
          </div>
        ))}
      </div>
      <div className="ml-[11px] mt-[6px] flex h-[43px] shrink-0">
        <div className="w-[301px] border border-[#828790] bg-white" />
        <div className="ml-[5px] flex flex-col justify-between pb-px">
          <div className="flex items-center gap-[5px] tracking-[-0.3px]"><Check on={false} />Expand</div>
          <div className="flex items-center gap-[5px] tracking-[-0.1px]"><Check />Select</div>
        </div>
      </div>
    </div>
  );
}

export default function App() {
  return (
    <div className="relative h-[1080px] w-[1920px] overflow-hidden bg-[#e4e4e4] font-['Liberation_Sans',Arial,sans-serif] text-black">
      <MenuBar />
      <Header />
      <NavBar />
      <div className="flex h-[848px]">
        <Side />
        <div className="flex w-[1745px] flex-col">
          <Mimic />
          <Charts />
        </div>
      </div>
      <AlarmBar />
      <BottomBar />
      <TimerWindow />
    </div>
  );
}
